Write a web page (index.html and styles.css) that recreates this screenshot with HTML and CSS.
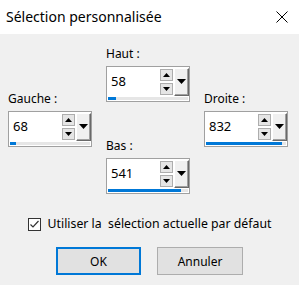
FILE: index.html
```html
<!DOCTYPE html>
<html lang="fr">
<head>
<meta charset="utf-8">
<title>Sélection personnalisée</title>
<link rel="stylesheet" href="styles.css">
</head>
<body>
<div class="titlebar">
  <span class="title">Sélection personnalisée</span>
  <svg class="close" width="12" height="12" viewBox="0 0 12 12"><path d="M0.5 0.5L11.5 11.5M11.5 0.5L0.5 11.5" stroke="#000" stroke-width="1" fill="none"/></svg>
</div>
<div class="content">
  <div class="fields">
    <div class="col side">
      <div class="field">
        <div class="label">Gauche :</div>
        <div class="spin">
          <div class="spin-row">
            <span class="value">68</span>
            <div class="arrows">
              <div class="arr"><svg width="7" height="4" viewBox="0 0 7 4"><path d="M3.5 0L7 4H0Z" fill="#000"/></svg></div>
              <div class="arr"><svg width="7" height="4" viewBox="0 0 7 4"><path d="M0 0H7L3.5 4Z" fill="#000"/></svg></div>
            </div>
            <div class="drop"><svg width="9" height="5" viewBox="0 0 9 5"><path d="M0 0H9L4.5 5Z" fill="#000"/></svg></div>
          </div>
          <div class="track"><div class="fill" style="width:7%"></div></div>
        </div>
      </div>
    </div>
    <div class="col middle">
      <div class="field">
        <div class="label">Haut :</div>
        <div class="spin">
          <div class="spin-row">
            <span class="value">58</span>
            <div class="arrows">
              <div class="arr"><svg width="7" height="4" viewBox="0 0 7 4"><path d="M3.5 0L7 4H0Z" fill="#000"/></svg></div>
              <div class="arr"><svg width="7" height="4" viewBox="0 0 7 4"><path d="M0 0H7L3.5 4Z" fill="#000"/></svg></div>
            </div>
            <div class="drop"><svg width="9" height="5" viewBox="0 0 9 5"><path d="M0 0H9L4.5 5Z" fill="#000"/></svg></div>
          </div>
          <div class="track"><div class="fill" style="width:10%"></div></div>
        </div>
      </div>
      <div class="field">
        <div class="label">Bas :</div>
        <div class="spin">
          <div class="spin-row">
            <span class="value">541</span>
            <div class="arrows">
              <div class="arr"><svg width="7" height="4" viewBox="0 0 7 4"><path d="M3.5 0L7 4H0Z" fill="#000"/></svg></div>
              <div class="arr"><svg width="7" height="4" viewBox="0 0 7 4"><path d="M0 0H7L3.5 4Z" fill="#000"/></svg></div>
            </div>
            <div class="drop"><svg width="9" height="5" viewBox="0 0 9 5"><path d="M0 0H9L4.5 5Z" fill="#000"/></svg></div>
          </div>
          <div class="track"><div class="fill" style="width:91%"></div></div>
        </div>
      </div>
    </div>
    <div class="col side">
      <div class="field">
        <div class="label">Droite :</div>
        <div class="spin">
          <div class="spin-row">
            <span class="value">832</span>
            <div class="arrows">
              <div class="arr"><svg width="7" height="4" viewBox="0 0 7 4"><path d="M3.5 0L7 4H0Z" fill="#000"/></svg></div>
              <div class="arr"><svg width="7" height="4" viewBox="0 0 7 4"><path d="M0 0H7L3.5 4Z" fill="#000"/></svg></div>
            </div>
            <div class="drop"><svg width="9" height="5" viewBox="0 0 9 5"><path d="M0 0H9L4.5 5Z" fill="#000"/></svg></div>
          </div>
          <div class="track"><div class="fill" style="width:95%"></div></div>
        </div>
      </div>
    </div>
  </div>
  <div class="check-row">
    <span class="checkbox"><svg width="11" height="11" viewBox="0 0 11 11"><path d="M1.5 5.5L4 8L9.5 2" stroke="#333" stroke-width="1.2" fill="none"/></svg></span>
    <span class="check-text">Utiliser la  sélection actuelle par défaut</span>
  </div>
  <div class="buttons">
    <div class="btn default">OK</div>
    <div class="btn">Annuler</div>
  </div>
</div>
</body>
</html>
```
FILE: styles.css
```css
* { box-sizing: border-box; }
html, body { margin: 0; }
body {
  width: 299px;
  height: 285px;
  background: #f0f0f0;
  font-family: "Noto Sans", "Segoe UI", sans-serif;
  font-size: 12px;
  color: #000;
  overflow: hidden;
}
.titlebar {
  height: 34px;
  background: #fff;
  display: flex;
  align-items: center;
  justify-content: space-between;
  padding: 0 11px 0 6px;
}
.title { font-size: 14px; line-height: 20px; }
.close { display: block; }
.content { padding: 12px 0 0 8px; }
.fields { display: flex; gap: 14px; }
.col { width: 84px; display: flex; flex-direction: column; }
.col.side { margin-top: 45px; }
.col.middle .field + .field { margin-top: 36px; }
.label { height: 16px; line-height: 16px; margin-bottom: 4px; }
.spin {
  height: 36px;
  border: 1px solid #a0a0a0;
  background: #fff;
  display: flex;
  flex-direction: column;
}
.spin-row { height: 29px; display: flex; align-items: flex-start; }
.value { flex: 1; padding: 5px 0 0 4px; font-size: 13px; line-height: 18px; }
.arrows { margin-top: 2px; width: 13px; display: flex; flex-direction: column; gap: 2px; }
.arr {
  height: 12px;
  border: 1px solid #adadad;
  background: #e5e5e5;
  display: flex;
  align-items: center;
  justify-content: center;
}
.arr svg, .drop svg { display: block; }
.drop {
  width: 15px;
  height: 28px;
  margin-left: 1px;
  margin-top: 1px;
  background: #f0f0f0;
  border-top: 1px solid #fff;
  border-left: 1px solid #fff;
  border-right: 1px solid #696969;
  border-bottom: 1px solid #696969;
  box-shadow: inset -1px -1px #a0a0a0;
  display: flex;
  justify-content: center;
  padding-top: 10px;
}
.track { height: 3px; margin: 1px 1px 0; background: #e6e6e6; }
.fill { height: 100%; background: #0078d7; }
.check-row {
  margin: 22px 8px 0 0;
  display: flex;
  align-items: center;
  justify-content: center;
  height: 16px;
}
.checkbox {
  width: 13px;
  height: 13px;
  border: 1px solid #333;
  background: #fff;
  margin-right: 7px;
  display: flex;
  align-items: center;
  justify-content: center;
}
.checkbox svg { display: block; }
.check-text { white-space: pre; line-height: 16px; font-size: 12.3px; }
.buttons {
  margin: 15px 8px 0 0;
  display: flex;
  justify-content: center;
  gap: 16px;
}
.btn {
  width: 86px;
  height: 28px;
  background: #e1e1e1;
  border: 1px solid #adadad;
  display: flex;
  align-items: center;
  justify-content: center;
}
.btn.default { width: 85px; border: 2px solid #0078d7; }
```
